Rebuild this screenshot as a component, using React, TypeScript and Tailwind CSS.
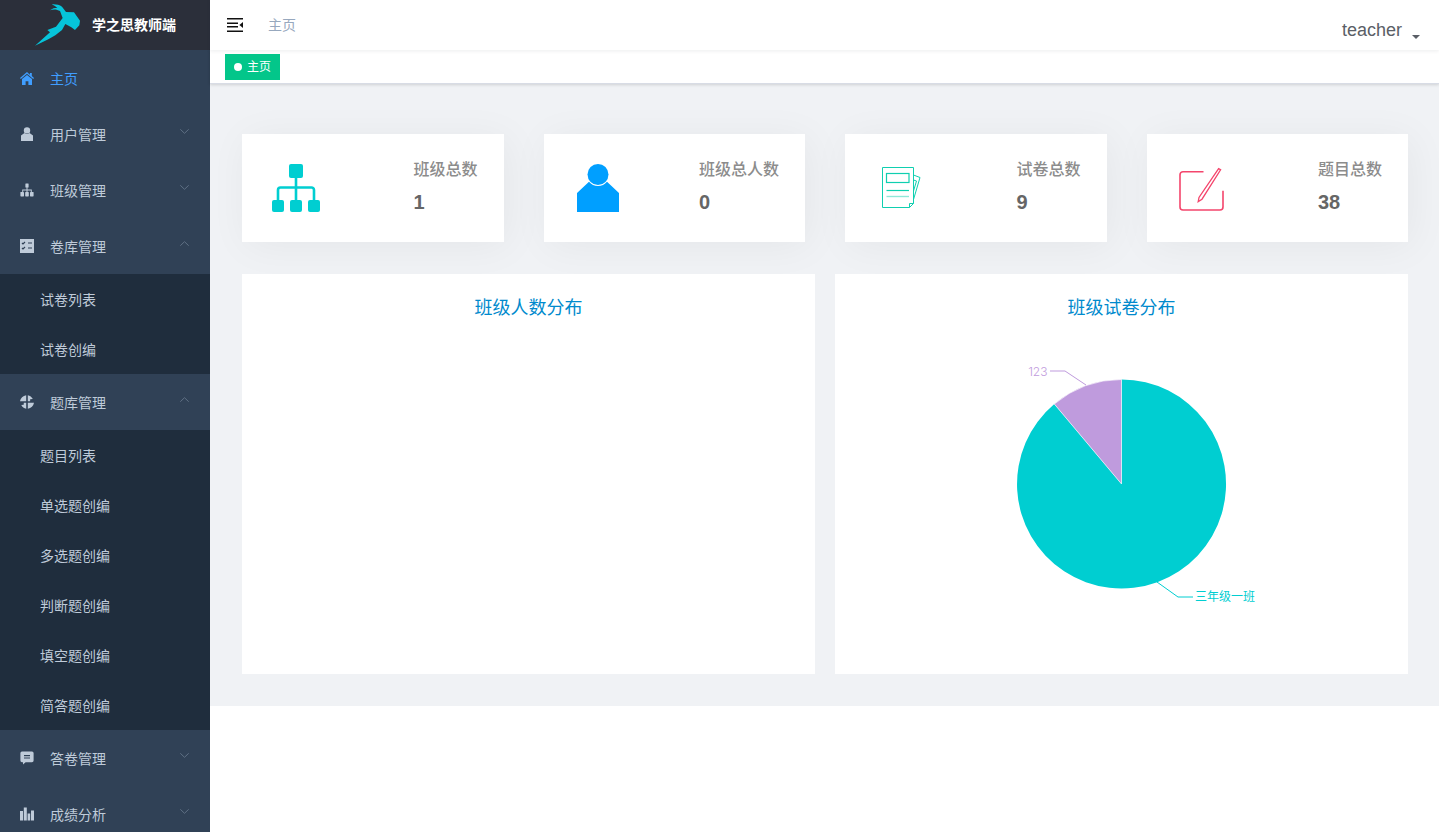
import type { ReactNode } from "react";

const FONT = "font-['Liberation_Sans','Noto_Sans_CJK_SC',sans-serif]";

function IconHome() {
  return (
    <svg viewBox="0 0 14 13" className="h-[13px] w-[14px]" fill="currentColor">
      <path d="M7 0 0 6l.8.9L7 1.7l6.2 5.2.8-.9-2.2-1.9V1h-1.9v1.7L7 0Z" />
      <path d="M7 2.9 2 7v6h3.6V9.3h2.8V13H12V7L7 2.9Z" />
    </svg>
  );
}

function IconUser() {
  return (
    <svg viewBox="0 0 14 14" className="h-[14px] w-[14px]" fill="currentColor">
      <circle cx="7" cy="3.4" r="3.2" />
      <path d="M4.4 5.9 1 8.4V14h12V8.4L9.6 5.9a4 4 0 0 1-5.2 0Z" />
    </svg>
  );
}

function IconTree() {
  return (
    <svg viewBox="0 0 14 14" className="h-[14px] w-[14px]" fill="currentColor">
      <rect x="5.4" y="0.5" width="3.2" height="4" rx="0.5" />
      <path d="M6.5 4h1v2.6h4.3V9h-1V7.6h-3.3V9h-1V7.6H3.2V9h-1V6.6h4.3V4Z" />
      <rect x="0.4" y="9" width="3.6" height="4.4" rx="0.6" />
      <rect x="5.2" y="9" width="3.6" height="4.4" rx="0.6" />
      <rect x="10" y="9" width="3.6" height="4.4" rx="0.6" />
    </svg>
  );
}

function IconChecklist() {
  return (
    <svg viewBox="0 0 14 14" className="h-[14px] w-[14px]">
      <rect width="14" height="14" fill="currentColor" />
      <path d="M2 4l1 1 2-2M2 9l1 1 2-2M8 4h4M8 9h4" stroke="#304156" strokeWidth="1.2" fill="none" />
    </svg>
  );
}

function IconPinwheel() {
  return (
    <svg viewBox="0 0 14 14" className="h-[14px] w-[14px]" fill="currentColor">
      <path d="M6.2 0.2v6H0C.5 3.2 3 .7 6.2.2Z" />
      <path d="M7.8 0.2c2.2.4 4 1.8 5 3.8l-2.6.2-.1 2H7.8V.2Z" />
      <path d="M7.8 7.8H14c-.5 3.1-3 5.5-6.2 6V7.8Z" />
      <path d="M0 7.8h6.2v6c-2.2-.4-3.9-1.8-4.9-3.8l2.4-.2.1-2H0Z" />
    </svg>
  );
}

function IconMessage() {
  return (
    <svg viewBox="0 0 14 14" className="h-[14px] w-[14px]">
      <path d="M2 .5h10A1.6 1.6 0 0 1 13.6 2v7.6A1.6 1.6 0 0 1 12 11.2H5.6L3 13.6v-2.4H2A1.6 1.6 0 0 1 .4 9.6V2A1.6 1.6 0 0 1 2 .5Z" fill="currentColor" />
      <path d="M4 4.6h6M4 7h6" stroke="#304156" strokeWidth="1.1" />
    </svg>
  );
}

function IconBars() {
  return (
    <svg viewBox="0 0 14 14" className="h-[14px] w-[14px]" fill="currentColor">
      <rect x="0" y="4" width="3" height="9.5" />
      <rect x="3.8" y="0.5" width="3" height="13" />
      <rect x="7.6" y="6.5" width="2.6" height="7" />
      <rect x="11" y="3.5" width="3" height="10" />
    </svg>
  );
}

function Chevron({ up }: { up?: boolean }) {
  return (
    <svg viewBox="0 0 9 5" className="h-[5px] w-[9px] text-[#5f7084]" fill="none" stroke="currentColor" strokeWidth="1">
      <path d={up ? "M.3 4.7 4.5.7l4.2 4" : "M.3.3l4.2 4 4.2-4"} />
    </svg>
  );
}

function MenuItem({ icon, label, open, arrow = true, active }: { icon: ReactNode; label: string; open?: boolean; arrow?: boolean; active?: boolean }) {
  return (
    <div className={`flex h-[56px] items-center pl-[20px] pr-[21px] text-[14px] ${active ? "text-[#409eff]" : "text-[#bfcbd9]"}`}>
      <span className="mr-[16px] flex w-[14px] justify-center">{icon}</span>
      <span className="flex-1 pt-[2px]">{label}</span>
      {arrow && (
        <span className="-mt-[6px] flex">
          <Chevron up={open} />
        </span>
      )}
    </div>
  );
}

function SubItems({ items }: { items: string[] }) {
  return (
    <div className="bg-[#1f2d3d]">
      {items.map((item) => (
        <div key={item} className="flex h-[50px] items-center pl-[40px] pt-[2px] text-[14px] text-[#bfcbd9]">
          {item}
        </div>
      ))}
    </div>
  );
}

function Sidebar() {
  return (
    <aside className="h-[832px] w-[210px] shrink-0 overflow-hidden bg-[#304156]">
      <div className="flex h-[50px] items-center bg-[#2b2f3a] pl-[30px]">
        <svg viewBox="0 0 162 150" className="mr-[8px] h-[50px] w-[54px]">
          <path
            fill="#06c4da"
            d="M15 137 60 97 52 90 78 80 98 54 90 33C80 27 70 27 60 31 67 25 74 23 82 23 76 19 71 16 65 13 76 12 88 14 96 20L108 36 132 37 150 62 148 76 135 90 124 82 106 72 96 90 76 106 55 118Z"
          />
        </svg>
        <span className="text-[14px] font-bold text-white">学之思教师端</span>
      </div>
      <MenuItem active arrow={false} icon={<IconHome />} label="主页" />
      <MenuItem icon={<IconUser />} label="用户管理" />
      <MenuItem icon={<IconTree />} label="班级管理" />
      <MenuItem open icon={<IconChecklist />} label="卷库管理" />
      <SubItems items={["试卷列表", "试卷创编"]} />
      <MenuItem open icon={<IconPinwheel />} label="题库管理" />
      <SubItems items={["题目列表", "单选题创编", "多选题创编", "判断题创编", "填空题创编", "简答题创编"]} />
      <MenuItem icon={<IconMessage />} label="答卷管理" />
      <MenuItem icon={<IconBars />} label="成绩分析" />
    </aside>
  );
}

function Header() {
  return (
    <div className="relative z-20 flex h-[50px] items-start bg-white shadow-[0_1px_4px_rgba(0,21,41,0.08)]">
      <svg viewBox="0 0 16 14" className="ml-[17px] mt-[18px] h-[14px] w-[16px]">
        <path d="M0 .8h16M0 5.2h11M0 8.8h11M0 13.2h16" stroke="#111" strokeWidth="1.5" />
        <path d="M16 4v6l-3.6-3L16 4Z" fill="#111" />
      </svg>
      <span className="ml-[25px] mt-[15px] text-[14px] leading-[20px] text-[#97a8be]">主页</span>
      <div className="ml-auto mr-[19px] mt-[17px] flex items-end">
        <span className="text-[18px] leading-[26px] text-[#5a5e66]">teacher</span>
        <span className="mb-[4px] ml-[10px] h-0 w-0 border-x-[4px] border-t-[4px] border-x-transparent border-t-[#5a5e66]" />
      </div>
    </div>
  );
}

function TagBar() {
  return (
    <div className="relative z-10 h-[34px] border-b border-[#d8dce5] bg-white pl-[15px] pt-[4px] shadow-[0_1px_3px_rgba(0,0,0,0.12),0_0_3px_rgba(0,0,0,0.04)]">
      <div className="flex h-[26px] w-[55px] items-center bg-[#03c68a] pl-[9px] text-[12px] text-white">
        <span className="mr-[5px] h-[8px] w-[8px] rounded-full bg-white" />
        主页
      </div>
    </div>
  );
}

function ClassIcon() {
  return (
    <svg viewBox="0 0 48 48" className="h-[48px] w-[48px]">
      <rect x="17" y="0" width="14" height="14" rx="2" fill="#00ced1" />
      <path d="M24 14v22M6 36V26a2.5 2.5 0 0 1 2.5-2.5h31A2.5 2.5 0 0 1 42 26v10" stroke="#00ced1" strokeWidth="2.6" fill="none" />
      <rect x="0" y="36" width="12" height="12" rx="2" fill="#00ced1" />
      <rect x="18" y="36" width="12" height="12" rx="2" fill="#00ced1" />
      <rect x="36" y="36" width="12" height="12" rx="2" fill="#00ced1" />
    </svg>
  );
}

function PersonIcon() {
  return (
    <svg viewBox="0 0 48 48" className="h-[48px] w-[48px]">
      <circle cx="24" cy="10.5" r="10.5" fill="#009fff" />
      <path d="M15 17.7A11.5 11.5 0 0 0 33 17.7L45 29V48H3V29Z" fill="#009fff" />
    </svg>
  );
}

function PaperIcon() {
  return (
    <svg viewBox="0 0 48 48" className="h-[48px] w-[48px]" fill="none" stroke="#0fcfb0" strokeWidth="1">
      <path d="M7.5 3.5h31v36l-4 4h-27v-40Z" />
      <path d="M34.5 43.5v-4h4" />
      <rect x="11.5" y="9.5" width="22.5" height="9" strokeWidth="1.2" />
      <path d="M11.5 26.5h22.5" strokeWidth="1.2" />
      <path d="M11.5 32.5h22.5" stroke="#8fe8d8" strokeWidth="1.4" />
      <path d="M38.5 11l6.5 2.5-6.5 22" />
      <path d="M38.5 16l3 1-3 10" />
    </svg>
  );
}

function PenIcon() {
  return (
    <svg viewBox="0 0 48 48" className="h-[48px] w-[48px]" fill="none" stroke="#f4456c" strokeWidth="1.6">
      <path d="M26.5 7.8H6a3 3 0 0 0-3 3V43a3 3 0 0 0 3 3h37a3 3 0 0 0 3-3V26.7" />
      <path d="M41.6 4.6 43.6 5.8 25 35.2 21.2 37.6 22 33.4 41.6 4.6Z" strokeWidth="1.3" />
    </svg>
  );
}

function StatCard({ icon, label, value }: { icon: ReactNode; label: string; value: string }) {
  return (
    <div className="flex h-[108px] items-start justify-between bg-white shadow-[4px_4px_40px_rgba(0,0,0,0.05)]">
      <div className="ml-[30px] mt-[30px]">{icon}</div>
      <div className="mr-[26px] mt-[26px]">
        <div className="text-[16px] font-medium leading-[20px] text-[#8c8c8c]">{label}</div>
        <div className="mt-[12px] text-[20px] font-bold leading-[20px] text-[#666]">{value}</div>
      </div>
    </div>
  );
}

function PieChart() {
  // slice boundary reaches the rim at 11% of the turn
  return (
    <svg viewBox="0 0 573 336" className="h-[336px] w-[573px]">
      <path d="M286.5 146 L286.5 41.5 A104.5 104.5 0 1 1 219.3 66 Z" fill="#00ced1" />
      <path d="M286.5 146 L219.3 66 A104.5 104.5 0 0 1 286.5 41.5 Z" fill="#bf9bdd" stroke="#fff" strokeWidth="0.6" />
      <path d="M251 47 L230 33 H215" stroke="#bf9bdd" fill="none" />
      <text x="212.5" y="37.5" textAnchor="end" fontSize="12" fontWeight="300" fontFamily="Inter, sans-serif" fill="#bf9bdd">123</text>
      <path d="M322 244 L343 259 H358" stroke="#00ced1" fill="none" />
      <text x="360" y="263" fontSize="12" fill="#00ced1">三年级一班</text>
    </svg>
  );
}

function ChartCard({ title, children }: { title: string; children?: ReactNode }) {
  return (
    <div className="h-[400px] bg-white">
      <div className="pt-[22px] text-center text-[18px] leading-[24px] text-[#008acd]">{title}</div>
      <div className="mt-[18px]">{children}</div>
    </div>
  );
}

export default function App() {
  return (
    <div className={`flex h-[832px] overflow-hidden bg-white ${FONT}`}>
      <Sidebar />
      <main className="min-w-0 flex-1">
        <Header />
        <TagBar />
        <div className="bg-[#f0f2f5] pb-[32px] pl-[32px] pr-[31px] pt-[50px]">
          <div className="grid grid-cols-4 gap-x-[40px]">
            <StatCard icon={<ClassIcon />} label="班级总数" value="1" />
            <StatCard icon={<PersonIcon />} label="班级总人数" value="0" />
            <StatCard icon={<PaperIcon />} label="试卷总数" value="9" />
            <StatCard icon={<PenIcon />} label="题目总数" value="38" />
          </div>
          <div className="mt-[32px] grid grid-cols-2 gap-x-[20px]">
            <ChartCard title="班级人数分布" />
            <ChartCard title="班级试卷分布">
              <PieChart />
            </ChartCard>
          </div>
        </div>
      </main>
    </div>
  );
}
